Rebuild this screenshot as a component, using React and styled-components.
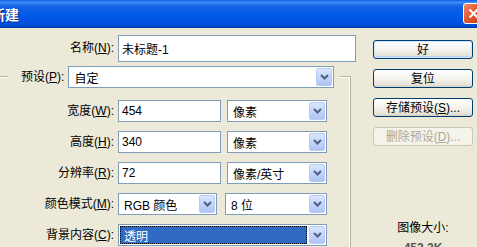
import React from "react";
import styled, { createGlobalStyle } from "styled-components";

const GlobalStyle = createGlobalStyle`
  html, body {
    margin: 0;
    padding: 0;
    background: #ece9d8;
  }
  body {
    font-family: "Liberation Sans", "Noto Sans CJK SC", sans-serif;
    font-size: 12px;
    color: #000;
  }
`;

const Window = styled.div`
  width: 477px;
  height: 247px;
  overflow: hidden;
  background: #ece9d8;
`;

const TitleBar = styled.div`
  height: 28px;
  display: flex;
  align-items: flex-start;
  justify-content: space-between;
  overflow: hidden;
  background: linear-gradient(
    #0a5fe6 0%,
    #3d8ff7 8%,
    #1463e4 22%,
    #0058e8 60%,
    #0050df 88%,
    #003aa8 100%
  );
`;

const Title = styled.span`
  margin: 6px 0 0 -9px;
  font-family: "Noto Sans CJK SC", sans-serif;
  font-weight: 700;
  font-size: 14px;
  line-height: 16px;
  color: #fff;
  text-shadow: 1px 1px 0 #0a2a80;
`;

const CloseButton = styled.div`
  margin: 3px -7px 0 0;
  width: 21px;
  height: 21px;
  box-sizing: border-box;
  border: 1px solid #fff;
  border-radius: 3px;
  background: linear-gradient(135deg, #f08a6a 0%, #e0552c 50%, #c23d1a 100%);
  display: flex;
  align-items: center;
  justify-content: center;
`;

const Body = styled.div`
  display: flex;
`;

const FormColumn = styled.div`
  width: 358px;
  flex-shrink: 0;
`;

const NameRow = styled.div`
  margin-top: 6px;
  display: grid;
  grid-template-columns: 114px 238px;
  column-gap: 4px;
  align-items: center;
  height: 28px;
`;

const Label = styled.span`
  text-align: right;
  white-space: nowrap;
  line-height: 14px;
`;

const TextBox = styled.div`
  box-sizing: border-box;
  height: ${(p) => p.$h || 22}px;
  width: ${(p) => p.$w}px;
  border: 1px solid #7f9db9;
  background: #fff;
  padding: 0 3px;
  display: flex;
  align-items: center;
  white-space: nowrap;
`;

const GroupBox = styled.div`
  margin-top: 14px;
  width: 350px;
  height: 200px;
  border-top: 1px solid #b5b2a0;
  border-right: 1px solid #b5b2a0;
  box-shadow: inset 0 1px 0 #fff, inset -1px 0 0 #fff;
`;

const Legend = styled.div`
  margin: -11px 0 0 8px;
  padding: 0 6px 0 13px;
  width: fit-content;
  background: #ece9d8;
  display: flex;
  align-items: center;
  gap: 4px;
`;

const Rows = styled.div`
  margin-top: 12px;
  display: flex;
  flex-direction: column;
  gap: 9px;
`;

const Row = styled.div`
  display: flex;
  align-items: center;
  height: 22px;
`;

const RowLabel = styled(Label)`
  width: 114px;
  margin-right: 4px;
  flex-shrink: 0;
`;

const Combo = styled.div`
  box-sizing: border-box;
  height: 22px;
  width: ${(p) => p.$w}px;
  margin-left: ${(p) => p.$ml || 0}px;
  border: 1px solid #7f9db9;
  background: #fff;
  padding: 1px;
  display: flex;
  align-items: stretch;
  flex-shrink: 0;
`;

const ComboText = styled.div`
  flex: 1;
  display: flex;
  align-items: center;
  padding-left: 4px;
  margin-right: 2px;
  white-space: nowrap;
  ${(p) =>
    p.$selected &&
    `
    background: #316ac5;
    color: #fff;
    outline: 1px dotted #000;
    outline-offset: -1px;
  `}
`;

const ComboButton = styled.div`
  width: 16px;
  flex-shrink: 0;
  box-sizing: border-box;
  border: 1px solid #b9cbf3;
  border-radius: 2px;
  background: linear-gradient(#dbe6fd, #c0d2fa 60%, #afc3f3);
  display: flex;
  align-items: center;
  justify-content: center;
`;

const ButtonColumn = styled.div`
  padding: 12px 0 0 15px;
  width: 100px;
  display: flex;
  flex-direction: column;
  align-items: stretch;
  gap: 10px;
`;

const Button = styled.div`
  box-sizing: border-box;
  height: 19px;
  border: 1px solid ${(p) => (p.$disabled ? "#c9c7ba" : "#003c74")};
  border-radius: 3px;
  background: ${(p) =>
    p.$disabled
      ? "#f5f4ea"
      : "linear-gradient(#ffffff 0%, #f4f3ee 50%, #e6e3d8 85%, #d6d0c5 100%)"};
  color: ${(p) => (p.$disabled ? "#aca899" : "#000")};
  box-shadow: ${(p) =>
    p.$default ? "inset 0 0 0 1px #cee7ff, inset 0 -1px 0 1px #bcd4f6" : "none"};
  display: flex;
  align-items: center;
  justify-content: center;
  line-height: 14px;
  white-space: nowrap;
`;

const SizeInfo = styled.div`
  margin-top: 65px;
  text-align: center;
  line-height: 14px;
`;

const SizeValue = styled.div`
  margin-top: -4px;
  text-align: center;
  font-weight: 700;
  color: #555;
  line-height: 14px;
`;

const Chevron = () => (
  <svg width="9" height="6" viewBox="0 0 9 6">
    <path d="M1 1 L4.5 4.5 L8 1" fill="none" stroke="#4d6185" strokeWidth="2" />
  </svg>
);

const Select = ({ w, ml, children, selected }) => (
  <Combo $w={w} $ml={ml}>
    <ComboText $selected={selected}>{children}</ComboText>
    <ComboButton>
      <Chevron />
    </ComboButton>
  </Combo>
);

const Mn = ({ k }) => (
  <>
    (<u>{k}</u>):
  </>
);

export default function App() {
  return (
    <Window>
      <GlobalStyle />
      <TitleBar>
        <Title>新建</Title>
        <CloseButton>
          <svg width="11" height="11" viewBox="0 0 11 11">
            <path d="M1.5 1.5 L9.5 9.5 M9.5 1.5 L1.5 9.5" stroke="#fff" strokeWidth="2" />
          </svg>
        </CloseButton>
      </TitleBar>
      <Body>
        <FormColumn>
          <NameRow>
            <Label>
              名称<Mn k="N" />
            </Label>
            <TextBox $w={238} $h={27}>未标题-1</TextBox>
          </NameRow>
          <GroupBox>
            <Legend>
              <Label>
                预设<Mn k="P" />
              </Label>
              <Select w={266}>自定</Select>
            </Legend>
            <Rows>
              <Row>
                <RowLabel>
                  宽度<Mn k="W" />
                </RowLabel>
                <TextBox $w={103}>454</TextBox>
                <Select w={100} ml={6}>像素</Select>
              </Row>
              <Row>
                <RowLabel>
                  高度<Mn k="H" />
                </RowLabel>
                <TextBox $w={103}>340</TextBox>
                <Select w={100} ml={6}>像素</Select>
              </Row>
              <Row>
                <RowLabel>
                  分辨率<Mn k="R" />
                </RowLabel>
                <TextBox $w={103}>72</TextBox>
                <Select w={100} ml={6}>像素/英寸</Select>
              </Row>
              <Row>
                <RowLabel>
                  颜色模式<Mn k="M" />
                </RowLabel>
                <Select w={99}>RGB 颜色</Select>
                <Select w={102} ml={8}>8 位</Select>
              </Row>
              <Row>
                <RowLabel>
                  背景内容<Mn k="C" />
                </RowLabel>
                <Select w={209} selected>
                  透明
                </Select>
              </Row>
            </Rows>
          </GroupBox>
        </FormColumn>
        <ButtonColumn>
          <Button $default>好</Button>
          <Button>复位</Button>
          <Button>
            存储预设(<u>S</u>)...
          </Button>
          <Button $disabled>
            删除预设(<u>D</u>)...
          </Button>
          <SizeInfo>图像大小:</SizeInfo>
          <SizeValue>452.2K</SizeValue>
        </ButtonColumn>
      </Body>
    </Window>
  );
}
